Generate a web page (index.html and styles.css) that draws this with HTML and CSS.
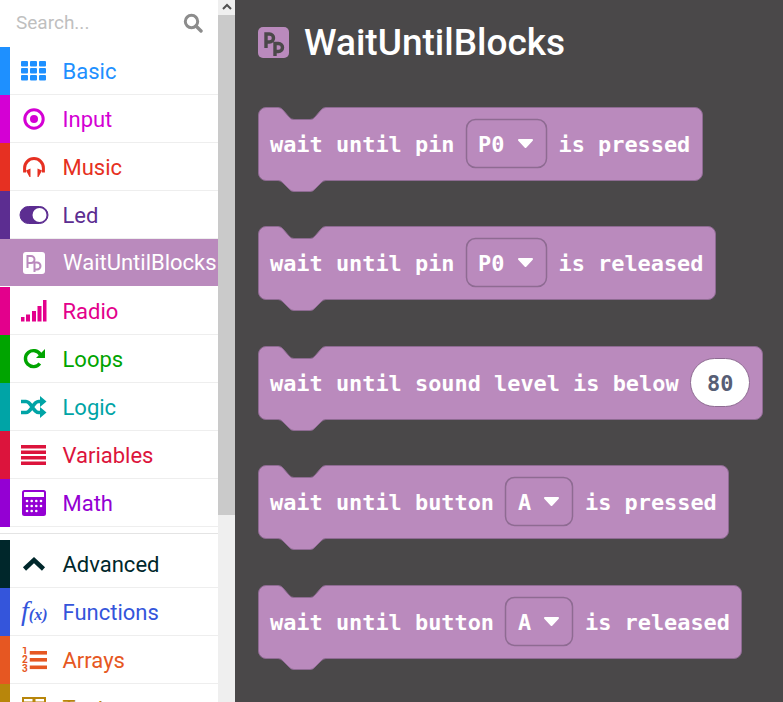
FILE: index.html
```html
<!DOCTYPE html>
<html lang="en">
<head>
  <meta charset="UTF-8" />
  <title>WaitUntilBlocks</title>
  <link rel="stylesheet" href="styles.css">
</head>
<body>
  <div class="sidebar">
    <div class="search">
      <span class="search-text">Search...</span>
      <svg class="search-icon" width="20" height="20" viewBox="0 0 20 20"><circle cx="8.500" cy="8.500" r="6.200" fill="none" stroke="#8c8c8c" stroke-width="3"/><path d="M13 13l5 5" stroke="#8c8c8c" stroke-width="3.400" stroke-linecap="round"/></svg>
    </div>

    <div class="cat basic"><span class="strip"></span><span class="icon">
      <svg width="26" height="20" viewBox="0 0 26 20" fill="currentColor"><rect x="0" y="0" width="7" height="5.500" rx="1"/><rect x="9" y="0" width="7" height="5.500" rx="1"/><rect x="18" y="0" width="7" height="5.500" rx="1"/><rect x="0" y="7" width="7" height="5.500" rx="1"/><rect x="9" y="7" width="7" height="5.500" rx="1"/><rect x="18" y="7" width="7" height="5.500" rx="1"/><rect x="0" y="14" width="7" height="5.500" rx="1"/><rect x="9" y="14" width="7" height="5.500" rx="1"/><rect x="18" y="14" width="7" height="5.500" rx="1"/></svg>
    </span><span class="label">Basic</span></div>

    <div class="cat input"><span class="strip"></span><span class="icon">
      <svg width="22" height="22" viewBox="0 0 22 22"><circle cx="11" cy="11" r="9.200" fill="none" stroke="currentColor" stroke-width="3"/><circle cx="11" cy="11" r="4" fill="currentColor"/></svg>
    </span><span class="label">Input</span></div>

    <div class="cat music"><span class="strip"></span><span class="icon">
      <svg width="24" height="20" viewBox="0 0 24 20"><path d="M2.600 15.500v-4.500a9.400 9.400 0 0 1 18.800 0v4.500" fill="none" stroke="currentColor" stroke-width="3"/><path d="M4 13.500l4.500-2v8.500h-1zM20 13.500l-4.500-2v8.500h1z" fill="currentColor"/></svg>
    </span><span class="label">Music</span></div>

    <div class="cat led"><span class="strip"></span><span class="icon">
      <svg width="30" height="20" viewBox="0 0 30 20"><rect x="1" y="1.500" width="28" height="17" rx="8.500" fill="currentColor" stroke="currentColor"/><circle cx="20.500" cy="10" r="7" fill="#fff"/></svg>
    </span><span class="label">Led</span></div>

    <div class="cat wait"><span class="icon">
      <svg width="22" height="22" viewBox="0 0 22 22"><rect width="22" height="22" rx="3" fill="#fff"/><path d="M4.500 16V4h3.500a3.500 3.500 0 0 1 0 7H4.500M11.500 20V10.500H14a3.500 3.500 0 0 1 0 7h-2.500" fill="none" stroke="#ba8abd" stroke-width="2"/></svg>
    </span><span class="label">WaitUntilBlocks</span></div>

    <div class="cat radio"><span class="strip"></span><span class="icon">
      <svg width="26" height="22" viewBox="0 0 26 22" fill="currentColor"><rect x="0" y="17" width="3.500" height="4.500"/><rect x="5" y="14.500" width="4" height="7"/><rect x="11" y="11" width="4" height="10.500"/><rect x="16.500" y="6" width="4" height="15.500"/><rect x="22" y="0" width="3.500" height="21.500"/></svg>
    </span><span class="label">Radio</span></div>

    <div class="cat loops"><span class="strip"></span><span class="icon">
      <svg width="22" height="22" viewBox="0 0 22 22"><path d="M16.800 15.500a8 8 0 1 1 .5-9" fill="none" stroke="currentColor" stroke-width="3.400"/><path d="M22 1v9h-9z" fill="currentColor"/></svg>
    </span><span class="label">Loops</span></div>

    <div class="cat logic"><span class="strip"></span><span class="icon">
      <svg width="26" height="22" viewBox="0 0 26 22"><path d="M0 5.500h5c5.500 0 7 11 12.500 11h3M0 16.500h5c5.500 0 7-11 12.500-11h3" fill="none" stroke="currentColor" stroke-width="3.600"/><path d="M19 0l6.500 5.500-6.500 5.500zM19 11l6.500 5.500-6.500 5.500z" fill="currentColor"/></svg>
    </span><span class="label">Logic</span></div>

    <div class="cat variables"><span class="strip"></span><span class="icon">
      <svg width="26" height="20" viewBox="0 0 26 20" fill="currentColor"><rect y="0" width="25" height="3.500"/><rect y="5.500" width="25" height="3.500"/><rect y="11" width="25" height="3.500"/><rect y="16.500" width="25" height="3.500"/></svg>
    </span><span class="label">Variables</span></div>

    <div class="cat math"><span class="strip"></span><span class="icon">
      <svg width="24" height="26" viewBox="0 0 24 26"><rect x="1" y="1" width="22" height="24" rx="1.500" fill="none" stroke="currentColor" stroke-width="2"/><rect x="1" y="7" width="22" height="18" fill="currentColor"/><g fill="#fff"><circle cx="5" cy="11" r="1.300"/><circle cx="9.700" cy="11" r="1.300"/><circle cx="14.300" cy="11" r="1.300"/><circle cx="19" cy="11" r="1.300"/><circle cx="5" cy="16" r="1.300"/><circle cx="9.700" cy="16" r="1.300"/><circle cx="14.300" cy="16" r="1.300"/><circle cx="19" cy="16" r="1.300"/><circle cx="5" cy="21" r="1.300"/><circle cx="9.700" cy="21" r="1.300"/><circle cx="14.300" cy="21" r="1.300"/></g></svg>
    </span><span class="label">Math</span></div>

    <div class="divider"></div>

    <div class="cat advanced"><span class="strip"></span><span class="icon">
      <svg width="24" height="16" viewBox="0 0 24 16"><path d="M2.500 13L12 4l9.500 9" fill="none" stroke="currentColor" stroke-width="4.500"/></svg>
    </span><span class="label">Advanced</span></div>

    <div class="cat functions"><span class="strip"></span><span class="icon fx"><i class="fx-f">f</i><i class="fx-x">(x)</i></span><span class="label">Functions</span></div>

    <div class="cat arrays"><span class="strip"></span><span class="icon">
      <svg width="26" height="26" viewBox="0 0 26 26" fill="currentColor"><rect x="8.750" y="4" width="17.500" height="3.600"/><rect x="8.750" y="11" width="17.500" height="3.600"/><rect x="8.750" y="18.500" width="17.500" height="3.600"/><text class="nums" x="1" y="7">1</text><text class="nums" x="1" y="16">2</text><text class="nums" x="1" y="25">3</text></svg>
    </span><span class="label">Arrays</span></div>

    <div class="cat text"><span class="strip"></span><span class="icon">
      <svg width="24" height="22" viewBox="0 0 24 22"><rect x="1" y="1" width="22" height="20" fill="none" stroke="currentColor" stroke-width="2"/><path d="M1 6h22M12 1v20" stroke="currentColor" stroke-width="3"/></svg>
    </span><span class="label">Text</span></div>
  </div>

  <div class="scrollbar">
    <div class="scroll-up"><svg width="10" height="7" viewBox="0 0 10 7"><path d="M1 6l4-4 4 4" fill="none" stroke="#505050" stroke-width="2"/></svg></div>
    <div class="scroll-thumb"></div>
  </div>

  <div class="main">
    <div class="title">
      <svg width="31" height="31" viewBox="0 0 31 31"><rect width="31" height="31" rx="5" fill="#ba8abd"/><path d="M8 21V7h3.500a4 4 0 0 1 0 8H8M17 29V16.500h3.500a4 4 0 0 1 0 8H17" fill="none" stroke="#4a4849" stroke-width="3.400"/></svg>
      <h1>WaitUntilBlocks</h1>
    </div>

    <svg class="block" width="445" height="86" viewBox="0 0 445 86">
      <path class="shape" d="M8 .5H20Q23 .5 25 3L31 10Q33 12.500 36 12.500H52Q55 12.500 57 10L63 3Q65 .5 68 .5h369a7.500 7.500 0 0 1 7.500 7.500v58a7.500 7.500 0 0 1-7.500 7.500H68Q65 73.500 63 76L57 82Q55 84.500 52 84.500H36Q33 84.500 31 82L25 76Q23 73.500 20 73.500H8A7.500 7.500 0 0 1 .5 66V8A7.500 7.500 0 0 1 8 .5z"/>
      <text class="code" x="12" y="45">wait until pin</text>
      <rect class="drop" x="208.500" y="12.500" width="80" height="48" rx="9"/>
      <text class="code" x="220" y="45">P0</text>
      <path class="arrow" d="M261 33h13l-6.500 7z"/>
      <text class="code" x="300.500" y="45">is pressed</text>
    </svg>

    <svg class="block" width="458" height="86" viewBox="0 0 458 86">
      <path class="shape" d="M8 .5H20Q23 .5 25 3L31 10Q33 12.500 36 12.500H52Q55 12.500 57 10L63 3Q65 .5 68 .5h382a7.500 7.500 0 0 1 7.500 7.500v58a7.500 7.500 0 0 1-7.500 7.500H68Q65 73.500 63 76L57 82Q55 84.500 52 84.500H36Q33 84.500 31 82L25 76Q23 73.500 20 73.500H8A7.500 7.500 0 0 1 .5 66V8A7.500 7.500 0 0 1 8 .5z"/>
      <text class="code" x="12" y="45">wait until pin</text>
      <rect class="drop" x="208.500" y="12.500" width="80" height="48" rx="9"/>
      <text class="code" x="220" y="45">P0</text>
      <path class="arrow" d="M261 33h13l-6.500 7z"/>
      <text class="code" x="300.500" y="45">is released</text>
    </svg>

    <svg class="block" width="505" height="86" viewBox="0 0 505 86">
      <path class="shape" d="M8 .5H20Q23 .5 25 3L31 10Q33 12.500 36 12.500H52Q55 12.500 57 10L63 3Q65 .5 68 .5h429a7.500 7.500 0 0 1 7.500 7.500v58a7.500 7.500 0 0 1-7.500 7.500H68Q65 73.500 63 76L57 82Q55 84.500 52 84.500H36Q33 84.500 31 82L25 76Q23 73.500 20 73.500H8A7.500 7.500 0 0 1 .5 66V8A7.500 7.500 0 0 1 8 .5z"/>
      <text class="code" x="12" y="45">wait until sound level is below</text>
      <rect class="pill" x="432.500" y="12.500" width="59" height="48" rx="24"/>
      <text class="code value" x="449" y="45">80</text>
    </svg>

    <svg class="block" width="471" height="86" viewBox="0 0 471 86">
      <path class="shape" d="M8 .5H20Q23 .5 25 3L31 10Q33 12.500 36 12.500H52Q55 12.500 57 10L63 3Q65 .5 68 .5h395a7.500 7.500 0 0 1 7.500 7.500v58a7.500 7.500 0 0 1-7.500 7.500H68Q65 73.500 63 76L57 82Q55 84.500 52 84.500H36Q33 84.500 31 82L25 76Q23 73.500 20 73.500H8A7.500 7.500 0 0 1 .5 66V8A7.500 7.500 0 0 1 8 .5z"/>
      <text class="code" x="12" y="45">wait until button</text>
      <rect class="drop" x="247.500" y="12.500" width="67" height="48" rx="9"/>
      <text class="code" x="260" y="45">A</text>
      <path class="arrow" d="M287 33h13l-6.500 7z"/>
      <text class="code" x="327" y="45">is pressed</text>
    </svg>

    <svg class="block" width="484" height="86" viewBox="0 0 484 86">
      <path class="shape" d="M8 .5H20Q23 .5 25 3L31 10Q33 12.500 36 12.500H52Q55 12.500 57 10L63 3Q65 .5 68 .5h408a7.500 7.500 0 0 1 7.500 7.500v58a7.500 7.500 0 0 1-7.500 7.500H68Q65 73.500 63 76L57 82Q55 84.500 52 84.500H36Q33 84.500 31 82L25 76Q23 73.500 20 73.500H8A7.500 7.500 0 0 1 .5 66V8A7.500 7.500 0 0 1 8 .5z"/>
      <text class="code" x="12" y="45">wait until button</text>
      <rect class="drop" x="247.500" y="12.500" width="67" height="48" rx="9"/>
      <text class="code" x="260" y="45">A</text>
      <path class="arrow" d="M287 33h13l-6.500 7z"/>
      <text class="code" x="327" y="45">is released</text>
    </svg>
  </div>
</body>
</html>
```

FILE: styles.css
```css
html, body {
  margin: 0;
  height: 702px;
  overflow: hidden;
}

body {
  display: flex;
  font-family: Roboto, sans-serif;
  background-color: #4a4849;
}

.sidebar {
  width: 218px;
  height: 702px;
  flex-shrink: 0;
  overflow: hidden;
  background: white;
}

.search {
  height: 47px;
  display: flex;
  align-items: center;
  justify-content: space-between;
  padding: 0 15px 2px 16px;
  box-sizing: border-box;
}

.search-text {
  font-size: 19px;
  color: #bfbfbf;
}

.cat {
  height: 48px;
  box-sizing: border-box;
  display: flex;
  align-items: center;
  border-bottom: 1px solid #eeeeee;
  white-space: nowrap;
}

.strip {
  width: 10px;
  height: 48px;
  flex-shrink: 0;
  background: currentColor;
  align-self: flex-start;
}

.icon {
  width: 52.500px;
  flex-shrink: 0;
  display: flex;
  justify-content: center;
  padding-right: 4px;
  box-sizing: border-box;
}

.label {
  font-size: 22px;
  padding-top: 2px;
}

.basic { color: #1e90ff; }
.input { color: #d400d4; }
.music { color: #e63022; }
.led { color: #5c2d91; }
.radio { color: #e3008c; }
.loops { color: #00a400; }
.logic { color: #00a4a6; }
.variables { color: #dc143c; }
.math { color: #9400d3; }
.advanced { color: #00272b; }
.functions { color: #3455db; }
.arrays { color: #e65722; }
.text { color: #b8860b; }

.wait {
  color: white;
  background: #ba8abd;
  border-bottom: 1px solid white;
}

.wait .icon {
  width: 63px;
  padding-left: 11px;
  padding-right: 6px;
}

.wait .label {
  padding-top: 0;
}

.divider {
  height: 7px;
  box-sizing: border-box;
  border-bottom: 1px solid #e4e4e4;
}

.divider + .cat {
  margin-top: 6px;
}

.fx {
  font-family: "Liberation Serif", serif;
  align-items: baseline;
}

.fx-f {
  font-size: 28px;
  line-height: 24px;
}

.fx-x {
  font-size: 16px;
  font-weight: bold;
}

.nums {
  font-family: Roboto, sans-serif;
  font-size: 10px;
  font-weight: bold;
}

.scrollbar {
  width: 17px;
  height: 702px;
  flex-shrink: 0;
  background: #efefef;
}

.scroll-up {
  height: 15px;
  display: flex;
  justify-content: center;
  padding-top: 3px;
  box-sizing: border-box;
}

.scroll-thumb {
  height: 500px;
  background: #cacaca;
}

.main {
  flex: 1;
  padding: 0 0 0 23px;
  display: flex;
  flex-direction: column;
  align-items: flex-start;
}

.title {
  display: flex;
  flex-shrink: 0;
  align-items: center;
  gap: 15px;
  height: 85px;
  margin-bottom: 22px;
}

.title h1 {
  margin: 0;
  font-size: 37px;
  font-weight: 500;
  color: white;
}

.block {
  display: block;
  flex-shrink: 0;
  margin-bottom: 34px;
}

.block:nth-child(even) {
  margin-bottom: 33px;
}

.shape {
  fill: #ba8abd;
  stroke: #8e6b92;
}

.code {
  font-family: "DejaVu Sans Mono", monospace;
  font-size: 21.900px;
  font-weight: bold;
  fill: white;
}

.value {
  fill: #575e75;
}

.drop {
  fill: #ba8abd;
  stroke: #8e6b92;
  stroke-width: 1.500;
}

.pill {
  fill: white;
  stroke: #8e6b92;
}

.arrow {
  fill: white;
  stroke: white;
  stroke-width: 2;
  stroke-linejoin: round;
}
```
